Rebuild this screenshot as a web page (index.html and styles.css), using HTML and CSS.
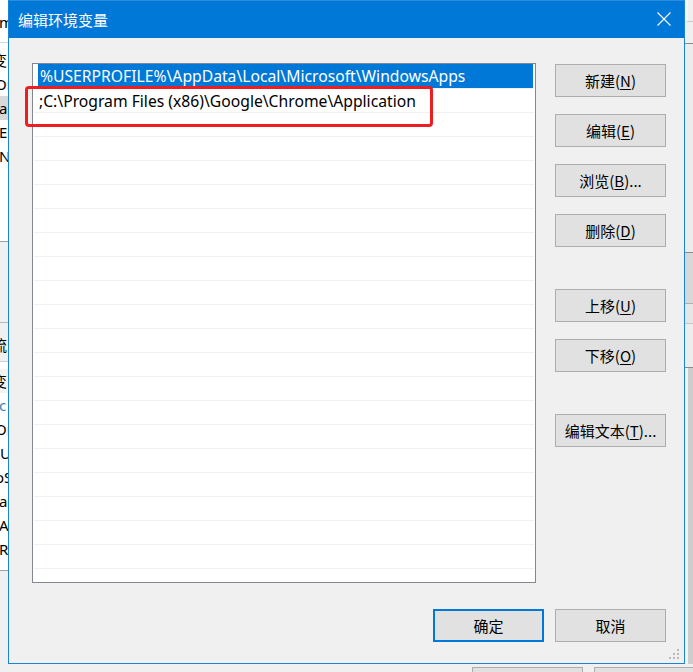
FILE: index.html
```html
<!DOCTYPE html>
<html lang="zh-CN">
<head>
<meta charset="utf-8">
<title>编辑环境变量</title>
<link rel="stylesheet" href="styles.css">
</head>
<body>
<div class="desk">
  <div class="bg-left">
    <div class="bl-top">
      <div class="bl-row">m</div>
    </div>
    <div class="bl-list">
      <div class="bl-row cjk">变</div>
      <div class="bl-row two">Or</div>
      <div class="bl-row sel">a</div>
      <div class="bl-row">E</div>
      <div class="bl-row">N</div>
    </div>
    <div class="bl-gap"></div>
    <div class="bl-head cjk">流</div>
    <div class="bl-list2">
      <div class="bl-row cjk colhead">变</div>
      <div class="bl-row blue">c</div>
      <div class="bl-row two">Or</div>
      <div class="bl-row two">IU</div>
      <div class="bl-row two">oS</div>
      <div class="bl-row">a</div>
      <div class="bl-row">A</div>
      <div class="bl-row">R</div>
      <div class="bl-row">r</div>
    </div>
  </div>

  <div class="bg-right">
    <div class="br-a"></div>
    <div class="br-b"></div>
    <div class="br-c"></div>
    <div class="br-d"></div>
    <div class="br-e"></div>
    <div class="br-f"></div>
    <div class="br-g"></div>
  </div>

  <div class="bg-bottom">
    <span class="bg-btn"></span>
    <span class="bg-btn"></span>
  </div>

  <div class="dialog">
    <div class="titlebar">
      <span class="title">编辑环境变量</span>
      <svg class="close" width="14" height="14" viewBox="0 0 14 14">
        <path d="M0.5 0.5 L13.5 13.5 M13.5 0.5 L0.5 13.5" stroke="#ffffff" stroke-width="1.1" fill="none"/>
      </svg>
    </div>
    <div class="content">
      <div class="list">
        <div class="row selected"><span class="cell">%USERPROFILE%\AppData\Local\Microsoft\WindowsApps</span></div>
        <div class="row"><span class="cell">;C:\Program Files (x86)\Google\Chrome\Application</span></div>
        <div class="row"></div><div class="row"></div><div class="row"></div><div class="row"></div>
        <div class="row"></div><div class="row"></div><div class="row"></div><div class="row"></div>
        <div class="row"></div><div class="row"></div><div class="row"></div><div class="row"></div>
        <div class="row"></div><div class="row"></div><div class="row"></div><div class="row"></div>
        <div class="row"></div><div class="row"></div><div class="row"></div><div class="row"></div>
      </div>
      <div class="side">
        <div class="group">
          <button class="btn">新建(<u>N</u>)</button>
          <button class="btn">编辑(<u>E</u>)</button>
          <button class="btn">浏览(<u>B</u>)...</button>
          <button class="btn">删除(<u>D</u>)</button>
        </div>
        <div class="group">
          <button class="btn">上移(<u>U</u>)</button>
          <button class="btn">下移(<u>O</u>)</button>
        </div>
        <div class="group">
          <button class="btn">编辑文本(<u>T</u>)...</button>
        </div>
      </div>
      <div class="footer">
        <button class="btn primary">确定</button>
        <button class="btn">取消</button>
      </div>
    </div>
    <svg class="grip" width="12" height="12" viewBox="0 0 12 12">
      <rect x="8" y="0" width="2" height="2" fill="#b9b9b9"/>
      <rect x="4" y="4" width="2" height="2" fill="#b9b9b9"/>
      <rect x="8" y="4" width="2" height="2" fill="#b9b9b9"/>
      <rect x="0" y="8" width="2" height="2" fill="#b9b9b9"/>
      <rect x="4" y="8" width="2" height="2" fill="#b9b9b9"/>
      <rect x="8" y="8" width="2" height="2" fill="#b9b9b9"/>
    </svg>
  </div>

  <div class="annot"></div>
</div>
</body>
</html>
```

FILE: styles.css
```css
html, body {
  margin: 0;
  padding: 0;
}

body {
  background: #f0f0f0;
  font-family: "Noto Sans", "Noto Sans CJK SC", sans-serif;
  color: #000;
}

.desk {
  position: relative;
  width: 693px;
  height: 672px;
  overflow: hidden;
}

/* ---------- background window, left ---------- */
.bg-left {
  position: absolute;
  left: 0;
  top: 0;
  width: 8px;
  height: 672px;
  overflow: hidden;
  background: #f0f0f0;
  font-size: 15px;
  display: flex;
  flex-direction: column;
}

.bl-top {
  height: 43px;
  background: #ffffff;
  border-bottom: 1px solid #d6d6d6;
  box-sizing: border-box;
  padding-top: 10px;
}

.bl-list {
  height: 199px;
  background: #ffffff;
  border-bottom: 1px solid #a0a0a0;
  padding-top: 5px;
  box-sizing: border-box;
}

.bl-row {
  height: 24px;
  line-height: 24px;
  white-space: nowrap;
  margin-left: -1px;
}

.bl-row.two {
  margin-left: -5px;
}

.bl-row.cjk,
.bl-head.cjk {
  font-family: "Noto Sans CJK SC", sans-serif;
  margin-left: -8px;
}

.bl-row.sel {
  background: #d9d9d9;
}

.bl-row.blue {
  color: #3b7fc4;
}

.bl-gap {
  height: 80px;
  border-bottom: 1px solid #b8b8b8;
}

.bl-head {
  height: 38px;
  line-height: 44px;
  white-space: nowrap;
  border-bottom: 1px solid #d0d0d0;
}

.bl-list2 {
  height: 209px;
  box-sizing: border-box;
  padding-top: 7px;
  background: #ffffff;
  border-bottom: 1px solid #a0a0a0;
  overflow: hidden;
}

.bl-row.colhead {
  background: #f3f3f3;
}

/* ---------- background window, right ---------- */
.bg-right {
  position: absolute;
  left: 685px;
  top: 0;
  width: 8px;
  height: 672px;
  background: #f0f0f0;
  display: flex;
  flex-direction: column;
}

.br-a {
  height: 21px;
  border-bottom: 1px solid #c9c9c9;
  border-left: 3px solid #f7f7f7;
}

.br-b {
  height: 21px;
  border-bottom: 1px solid #8a8a8a;
}

.br-c {
  height: 208px;
  background: #ececec;
  border-bottom: 1px solid #8a8a8a;
}

.br-d {
  height: 50px;
  background: #d8d8d8;
  border-bottom: 1px solid #b0b0b0;
}

.br-e {
  height: 19px;
  background: #e6e6e6;
  border-bottom: 1px solid #c8c8c8;
}

.br-f {
  height: 43px;
  background: #ededed;
  border-bottom: 1px solid #8a8a8a;
}

.br-g {
  flex: 1;
  background: linear-gradient(to right, #f4f4f4 0, #f4f4f4 3px, #cdcdcd 3px, #cdcdcd 100%);
}

/* ---------- background window, bottom ---------- */
.bg-bottom {
  position: absolute;
  left: 0;
  top: 664px;
  width: 693px;
  height: 8px;
  background: #f0f0f0;
  display: flex;
  padding-top: 3px;
  padding-left: 472px;
  gap: 11px;
  box-sizing: border-box;
  overflow: hidden;
}

.bg-btn {
  flex: none;
  width: 111px;
  height: 20px;
  box-sizing: border-box;
  border: 1px solid #adadad;
  background: #e1e1e1;
}

/* ---------- dialog ---------- */
.dialog {
  position: absolute;
  left: 8px;
  top: 0;
  width: 677px;
  height: 664px;
  box-sizing: border-box;
  border: 1px solid #1883d7;
  border-top-color: #2b8ddb;
  background: #f0f0f0;
  display: flex;
  flex-direction: column;
}

.titlebar {
  height: 37px;
  flex: none;
  background: #0078d7;
  color: #ffffff;
  display: flex;
  align-items: center;
  justify-content: space-between;
  padding: 0 13px 0 9px;
}

.title {
  font-family: "Noto Sans CJK SC", sans-serif;
  font-size: 15px;
  line-height: 20px;
}

.close {
  display: block;
  margin-top: -1px;
}

.content {
  flex: 1;
  display: grid;
  grid-template-columns: 504px 111px;
  column-gap: 19px;
  align-content: start;
  padding: 25px 0 0 23px;
}

.list {
  height: 520px;
  box-sizing: border-box;
  border: 1px solid #828790;
  background: #ffffff;
  overflow: hidden;
}

.row {
  height: 24px;
  box-sizing: border-box;
  margin: 0 1px;
  padding: 0 1px 0 4px;
  font-size: 15.7px;
  line-height: 24px;
  white-space: nowrap;
  overflow: hidden;
}

.row + .row {
  border-top: 1px solid #f0f0f0;
}

.cell {
  display: block;
  height: 24px;
  padding-left: 1px;
}

.row.selected .cell {
  background: #0078d7;
  color: #ffffff;
  padding-left: 2px;
}

.side {
  margin-top: 1px;
  display: flex;
  flex-direction: column;
  gap: 42px;
}

.group {
  display: flex;
  flex-direction: column;
  gap: 17px;
}

.btn {
  width: 111px;
  height: 33px;
  box-sizing: border-box;
  margin: 0;
  padding: 1px 0 0 0;
  border: 1px solid #adadad;
  border-radius: 0;
  background: #e1e1e1;
  color: #000000;
  font-family: "Noto Sans CJK SC", sans-serif;
  font-size: 15px;
  line-height: 20px;
}

.btn u {
  text-underline-offset: 2px;
}

.footer {
  grid-column: 1 / -1;
  justify-self: end;
  margin-top: 26px;
  display: flex;
  gap: 11px;
}

.btn.primary {
  border: 2px solid #0078d7;
}

.grip {
  position: absolute;
  right: 3px;
  bottom: 2px;
}

/* ---------- annotation overlay ---------- */
.annot {
  position: absolute;
  left: 25px;
  top: 86px;
  width: 408px;
  height: 41px;
  box-sizing: border-box;
  border: 3px solid #ee1d23;
  border-radius: 4px;
}
```
